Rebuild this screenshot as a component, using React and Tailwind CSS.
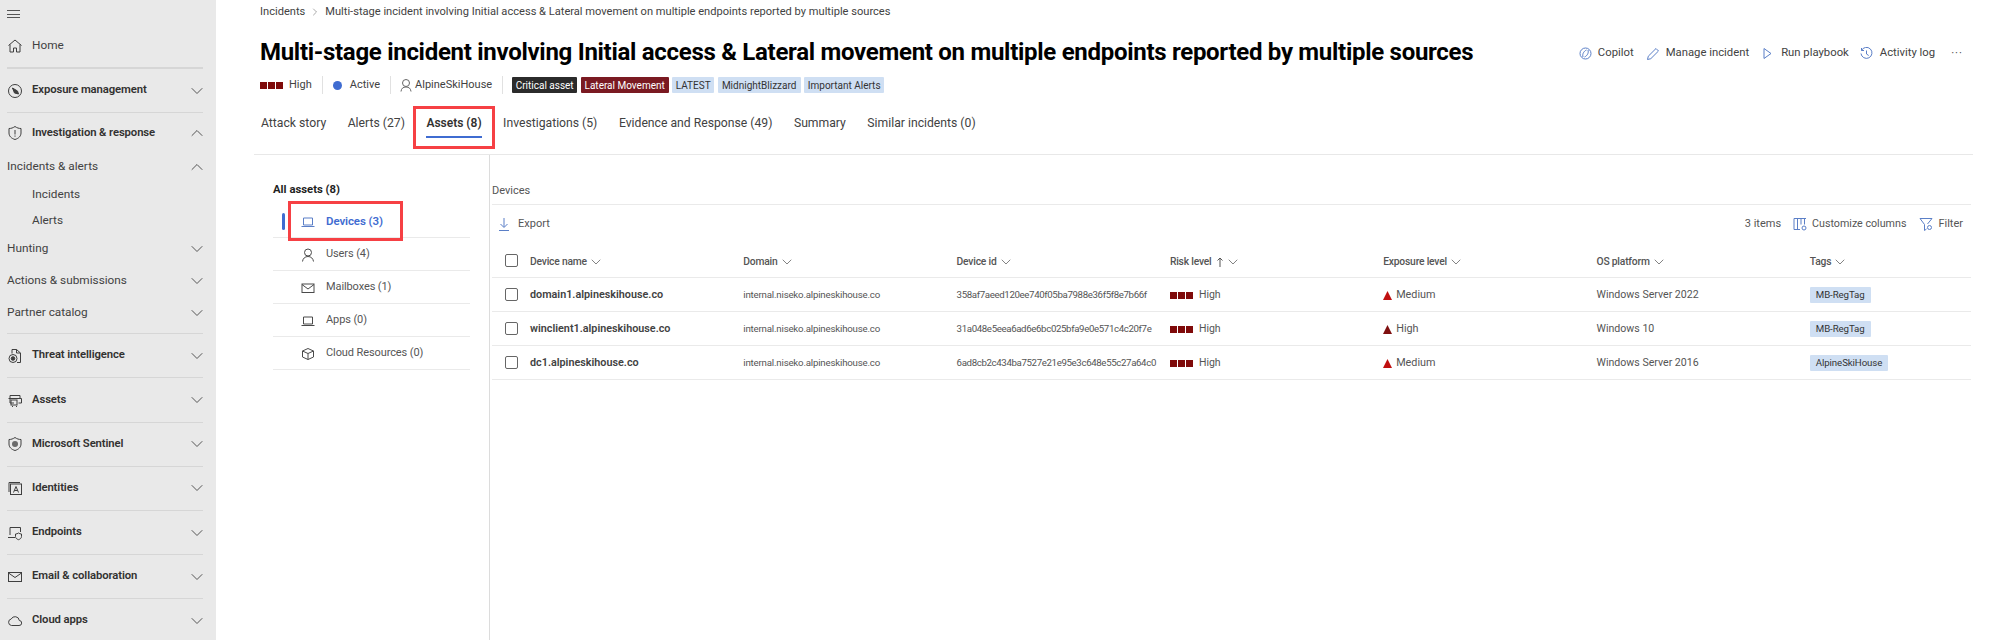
import React from "react";
import { ChevronDown, ChevronUp } from "lucide-react";

const Ico = ({ children, w = 16, h = 16, className = "", vb }) => (
  <svg width={w} height={h} viewBox={vb || `0 0 ${w} ${h}`} fill="none" stroke="currentColor" strokeWidth="1" className={`shrink-0 ${className}`}>
    {children}
  </svg>
);

const icons = {
  home: <Ico><path d="M1.5 7.5 8 2l6.5 5.5M3 6.5v7.5h3.5v-4h3v4H13V6.5" /></Ico>,
  exposure: <Ico><circle cx="8" cy="8" r="6.5" /><path d="M5 5l6 6M5.500 5l5 3 1 3-4-1z" fill="currentColor" /></Ico>,
  shield: <Ico><path d="M8 1.5c2 1.4 3.8 2 6 2v4.5c0 3.2-2.4 5.4-6 6.5-3.6-1.1-6-3.3-6-6.5V3.5c2.2 0 4-.6 6-2z" /><path d="M8 5v4.5M8 10.5v1.2" /></Ico>,
  threat: <Ico><path d="M9.5 1.5H5v4M9.5 1.5 13.5 5v9.5H10M9.5 1.5V5h4" /><circle cx="6" cy="10.5" r="4" /><circle cx="6" cy="10.5" r="1.8" fill="currentColor" /></Ico>,
  assets: <Ico><path d="M3 11V3.5h10V6M1.5 6.5h13V11h-3M3 11h4" /><rect x="4" y="8" width="6" height="5" /><path d="M5 14.5h1M9 14.5h1" /></Ico>,
  sentinel: <Ico><path d="M8 1.5c2 1.4 3.8 2 6 2v4.5c0 3.2-2.4 5.4-6 6.5-3.6-1.1-6-3.3-6-6.5V3.5c2.2 0 4-.6 6-2z" /><circle cx="8" cy="8" r="3" fill="currentColor" stroke="none" opacity="0.75" /></Ico>,
  identities: <Ico><path d="M2 12V2.5h11" /><rect x="3.5" y="4" width="11" height="10.5" /><path d="M6.5 12.5 9 6.5l2.5 6M7.4 10.5h3.2" /></Ico>,
  endpoints: <Ico><path d="M3 10V2.5h10.5V7M1 12.5h7" /><path d="M11.5 8c1 .7 1.8 1 3 1v2.5c0 1.5-1.2 2.6-3 3.2-1.8-.6-3-1.7-3-3.2V9c1.2 0 2-.3 3-1z" /></Ico>,
  mail: <Ico><rect x="1.5" y="3.5" width="13" height="9" /><path d="M1.5 4 8 8.500 14.500 4" /></Ico>,
  cloud: <Ico><path d="M4.5 12.5h7.5a2.5 2.5 0 0 0 .3-5A4.3 4.3 0 0 0 4.2 6 3.3 3.3 0 0 0 4.5 12.500z" /></Ico>,
};

const Down = () => <ChevronDown size={20} strokeWidth={1.2} className="text-[#555] shrink-0 mr-[-4px] my-[-4px]" />;
const Up = () => <ChevronUp size={20} strokeWidth={1.2} className="text-[#555] shrink-0 mr-[-4px] my-[-4px]" />;

const Row = ({ icon, label }) => (
  <div className="flex items-center h-[44.2px] border-b border-[#d6d6d6] mr-[13px] ml-[7px]">
    <span className="w-[25px] text-[#3f3f3f]">{icons[icon]}</span>
    <span className="flex-1 text-[11.3px] tracking-[-0.1px] font-semibold text-[#323130]">{label}</span>
    <Down />
  </div>
);

const Sub = ({ label, h, open, chevron, indent }) => (
  <div style={{ height: h }} className={`flex items-center mr-[13px] ${indent ? "ml-[32px]" : "ml-[7px]"}`}>
    <span className="flex-1 text-[11.8px] text-[#424242]">{label}</span>
    {chevron && (open ? <Up /> : <Down />)}
  </div>
);

function Sidebar() {
  return (
    <aside className="w-[216px] h-[640px] shrink-0 bg-[#e9e9e9] overflow-hidden">
      <div className="h-[24px] pl-[7px] pt-[10px]">
        <div className="w-[13px] h-[8px] border-y border-[#555] relative">
          <div className="absolute top-[2.5px] w-full h-px bg-[#555]" />
        </div>
      </div>
      <div className="flex items-center h-[45px] border-b-2 border-[#d6d6d6] mx-[7px] mr-[13px]">
        <span className="w-[25px] text-[#3f3f3f]">{icons.home}</span>
        <span className="text-[11.8px] text-[#424242]">Home</span>
      </div>
      <Row icon="exposure" label="Exposure management" />
      <div className="h-[40px] flex items-center mr-[13px] ml-[7px]">
        <span className="w-[25px] text-[#3f3f3f]">{icons.shield}</span>
        <span className="flex-1 text-[11.3px] tracking-[-0.1px] font-semibold text-[#323130]">Investigation &amp; response</span>
        <Up />
      </div>
      <Sub label="Incidents & alerts" h={28} chevron open />
      <Sub label="Incidents" h={28} indent />
      <Sub label="Alerts" h={24} indent />
      <Sub label="Hunting" h={32} chevron />
      <Sub label="Actions & submissions" h={32} chevron />
      <Sub label="Partner catalog" h={31} chevron />
      <div className="h-[6px] border-b border-[#d6d6d6] mx-[7px] mr-[13px]" />
      <Row icon="threat" label="Threat intelligence" />
      <Row icon="assets" label="Assets" />
      <Row icon="sentinel" label="Microsoft Sentinel" />
      <Row icon="identities" label="Identities" />
      <Row icon="endpoints" label="Endpoints" />
      <Row icon="mail" label="Email & collaboration" />
      <Row icon="cloud" label="Cloud apps" />
    </aside>
  );
}

const Squares = () => (
  <span className="flex gap-[1px] shrink-0">
    <i className="w-[7px] h-[7px] bg-[#7f0a0a]" />
    <i className="w-[7px] h-[7px] bg-[#7f0a0a]" />
    <i className="w-[7px] h-[7px] bg-[#7f0a0a]" />
  </span>
);

const Sep = () => <span className="block w-px h-[18px] bg-[#e1e1e1]" />;

function Tag({ children, className = "bg-[#cfdff3] text-[#333]", w }) {
  return <span style={{ width: w }} className={`h-[16px] flex items-center justify-center rounded-[1px] text-[10px] whitespace-nowrap ${className}`}>{children}</span>;
}

function Header() {
  return (
    <div className="pl-[6px] pr-[2px] border-b border-[#e8e8e8] h-[155px]">
      <div className="h-[24px] flex items-center text-[11.1px] text-[#424242]">
        <span>Incidents</span>
        <ChevronDown size={12} strokeWidth={1} className="-rotate-90 mx-[4px] text-[#555]" />
        <span>Multi-stage incident involving Initial access &amp; Lateral movement on multiple endpoints reported by multiple sources</span>
      </div>
      <div className="mt-[10px] h-[36px] flex items-center justify-between">
        <h1 className="text-[24px] font-bold tracking-[-0.29px] text-black leading-none whitespace-nowrap">Multi-stage incident involving Initial access &amp; Lateral movement on multiple endpoints reported by multiple sources</h1>
        <div className="flex items-center text-[11.3px] text-[#424242] whitespace-nowrap mr-[8px] mt-[3px]">
          <span className="flex items-center gap-[6px]">
            <Ico w={13} h={13} className="text-[#5b7fc7]"><circle cx="6.500" cy="6.500" r="5.500" /><path d="M4 10c-1-3 1-6 3.500-7M9 3c1 3-1 6-3.500 7" /></Ico>Copilot
          </span>
          <span className="flex items-center gap-[6px] ml-[12px]">
            <Ico w={14} h={14} className="text-[#5b7fc7]"><path d="M1.5 12.5l.8-3.3 7.7-7.7 2.5 2.5-7.7 7.7z" /></Ico>Manage incident
          </span>
          <span className="flex items-center gap-[9px] ml-[14px]">
            <Ico w={9} h={13} className="text-[#5b7fc7]"><path d="M1 1.5v10l7-5z" /></Ico>Run playbook
          </span>
          <span className="flex items-center gap-[7px] ml-[11px]">
            <Ico w={13} h={13} className="text-[#5b7fc7]"><path d="M1.5 3.5A5.5 5.5 0 1 1 1 6.5M1.5 1v2.5H4M6.5 3.5v3.5l2.2 1.5" /></Ico>Activity log
          </span>
          <span className="ml-[16px] tracking-[1px] leading-none">···</span>
        </div>
      </div>
      <div className="mt-[6px] h-[18px] flex items-center text-[11px] text-[#424242] whitespace-nowrap">
        <Squares />
        <span className="ml-[6px]">High</span>
        <span className="ml-[10px]"><Sep /></span>
        <span className="ml-[10px] w-[9px] h-[9px] rounded-full bg-[#3f6cd1]" />
        <span className="ml-[8px]">Active</span>
        <span className="ml-[10px]"><Sep /></span>
        <Ico w={12} h={14} className="ml-[9px] text-[#666]"><circle cx="6" cy="5" r="3.5" /><path d="M1 13.5c.3-3 2-4.500 5-4.500s4.700 1.500 5 4.500" /></Ico>
        <span className="ml-[3px]">AlpineSkiHouse</span>
        <span className="ml-[10px]"><Sep /></span>
        <div className="ml-[9px] flex gap-[3.5px]">
          <Tag w={65} className="bg-[#2b2b2b] text-white">Critical asset</Tag>
          <Tag w={88} className="bg-[#7a1a22] text-white">Lateral Movement</Tag>
          <Tag w={42}>LATEST</Tag>
          <Tag w={83}>MidnightBlizzard</Tag>
          <Tag w={80}>Important Alerts</Tag>
        </div>
      </div>
      <div className="mt-[13px] flex gap-[21.5px] text-[12.2px] text-[#424242] pl-[1px]">
        <span className="h-[31px] pt-[2px] flex items-center">Attack story</span>
        <span className="h-[31px] pt-[2px] flex items-center">Alerts (27)</span>
        <span className="relative h-[31px] pt-[2px] flex items-center text-[12px] font-semibold text-[#323130] border-b-2 border-[#3f6cd1]">
          Assets (8)
          <span className="absolute left-[-13px] right-[-13px] top-[-1px] h-[43px] border-[3px] border-[#f64044]" />
        </span>
        <span className="h-[31px] pt-[2px] flex items-center">Investigations (5)</span>
        <span className="h-[31px] pt-[2px] flex items-center">Evidence and Response (49)</span>
        <span className="h-[31px] pt-[2px] flex items-center">Summary</span>
        <span className="h-[31px] pt-[2px] flex items-center">Similar incidents (0)</span>
      </div>
    </div>
  );
}

const laptop = <Ico w={14} h={14}><path d="M2.500 10V3h9v7zM.5 11.500h13" /></Ico>;

function AssetNav() {
  const rows = [
    { label: "Devices (3)", active: true, icon: laptop },
    { label: "Users (4)", icon: <Ico w={14} h={14}><circle cx="7" cy="4.500" r="3.500" /><path d="M1.500 13.500c.4-3 2.400-5 5.500-5s5.100 2 5.500 5" /></Ico> },
    { label: "Mailboxes (1)", icon: <Ico w={14} h={14}><rect x="1" y="3" width="12" height="8.500" /><path d="M1 3.500 7 8l6-4.500" /></Ico> },
    { label: "Apps (0)", icon: laptop },
    { label: "Cloud Resources (0)", icon: <Ico w={14} h={14}><path d="M7 1.500 12.500 4v6L7 12.500 1.500 10V4zM1.500 4 7 6.500 12.500 4M7 6.500v6" /></Ico> },
  ];
  return (
    <div className="w-[236px] shrink-0 border-r border-[#dcdcdc] pl-[19px] pr-[19px] h-full">
      <div className="pt-[27px] h-[50px] text-[11.3px] font-bold text-[#1f1f1f]">All assets (8)</div>
      {rows.map((r) => (
        <div key={r.label} className="relative h-[33px] pt-[1px] flex items-center border-b border-[#eaeaea] pl-[28px] text-[11px] tracking-[-0.1px]">
          {r.active && <span className="absolute left-[9px] top-[8px] w-[3px] h-[17px] rounded-full bg-[#3f6cd1]" />}
          {r.active && <span className="absolute left-[15px] top-[-4px] w-[115px] h-[40px] border-[3px] border-[#f64044]" />}
          <span className={r.active ? "text-[#5b7fc7]" : "text-[#4a4a4a]"}>{r.icon}</span>
          <span className={`ml-[11px] ${r.active ? "font-semibold text-[11.5px] text-[#3f6cd1]" : "text-[#555]"}`}>{r.label}</span>
        </div>
      ))}
    </div>
  );
}

const Box = () => <span className="w-[13px] h-[13px] rounded-[2px] border border-[#666] shrink-0 bg-white" />;

const Th = ({ children, sort }) => (
  <div className="flex items-center text-[10.3px] tracking-[-0.2px] font-medium text-[#555] pt-[3px]">
    {children}
    {sort && <Ico w={8} h={10} className="ml-[5px]"><path d="M4 10V1M1.500 3.500 4 1l2.500 2.500" /></Ico>}
    <ChevronDown size={16} strokeWidth={1.1} className="ml-[1px] text-[#555]" />
  </div>
);

const devices = [
  { name: "domain1.alpineskihouse.co", id: "358af7aeed120ee740f05ba7988e36f5f8e7b66f", exp: "Medium", os: "Windows Server 2022", tag: "MB-RegTag" },
  { name: "winclient1.alpineskihouse.co", id: "31a048e5eea6ad6e6bc025bfa9e0e571c4c20f7e", exp: "High", os: "Windows 10", tag: "MB-RegTag" },
  { name: "dc1.alpineskihouse.co", id: "6ad8cb2c434ba7527e21e95e3c648e55c27a64c0", exp: "Medium", os: "Windows Server 2016", tag: "AlpineSkiHouse" },
];

function DeviceTable() {
  return (
    <div className="flex-1 pl-[2px] pr-[2px]">
      <div className="h-[50px] pt-[28px] border-b border-[#eaeaea] text-[11px] text-[#555] leading-[16px]">Devices</div>
      <div className="h-[38px] flex items-center text-[11px] text-[#555]">
        <Ico w={12} h={14} className="ml-[6px] text-[#5b7fc7]"><path d="M6 1v9M2.500 7 6 10.500 9.500 7M1 13.500h10" /></Ico>
        <span className="ml-[8px]">Export</span>
        <span className="ml-auto">3 items</span>
        <Ico w={14} h={14} className="ml-[12px] text-[#5b7fc7]"><path d="M1 1.500h12M1 1.500v11h6M4.500 1.500v11M8 1.500v6M11.500 1.500v6" /><circle cx="11" cy="11" r="2" /></Ico>
        <span className="ml-[5px] text-[10.7px]">Customize columns</span>
        <Ico w={14} h={14} className="ml-[13px] text-[#5b7fc7]"><path d="M1 1.500h12L8.500 7M1 1.500 5.500 7.500v6l2-1.500" /><circle cx="10.500" cy="10.500" r="2" /></Ico>
        <span className="ml-[5px] mr-[8px]">Filter</span>
      </div>
      <div className="h-[35px] flex items-center border-b border-[#eaeaea]">
        <span className="ml-[13px] mr-[12px] flex"><Box /></span>
        <div className="grid grid-cols-[213.3px_213.3px_213.3px_213.3px_213.3px_213.3px_auto] flex-1">
          <Th>Device name</Th>
          <Th>Domain</Th>
          <Th>Device id</Th>
          <Th sort>Risk level</Th>
          <Th>Exposure level</Th>
          <Th>OS platform</Th>
          <Th>Tags</Th>
        </div>
      </div>
      {devices.map((d) => (
        <div key={d.name} className="h-[34px] flex items-center border-b border-[#eaeaea]">
          <span className="ml-[13px] mr-[12px] flex"><Box /></span>
          <div className="grid grid-cols-[213.3px_213.3px_213.3px_213.3px_213.3px_213.3px_auto] flex-1 items-center text-[9.7px] text-[#555] pt-[1px]">
            <span className="text-[10.8px] font-semibold text-[#424242]">{d.name}</span>
            <span className="tracking-[-0.2px]">internal.niseko.alpineskihouse.co</span>
            <span className="tracking-[-0.37px] whitespace-nowrap">{d.id}</span>
            <span className="flex items-center"><Squares /><span className="ml-[6px] text-[10.5px]">High</span></span>
            <span className="flex items-center">
              <svg width="9" height="9" viewBox="0 0 9 9" className={d.exp === "High" ? "text-[#7f1010]" : "text-[#c01010]"}><path d="M4.500 0 9 9H0z" fill="currentColor" /></svg>
              <span className="ml-[4px] text-[10.8px]">{d.exp}</span>
            </span>
            <span className="text-[10.6px]">{d.os}</span>
            <span><span className="inline-block h-[16px] leading-[16px] px-[6px] bg-[#cfdff3] text-[9.7px] tracking-[-0.1px] text-[#333] rounded-[1px]">{d.tag}</span></span>
          </div>
        </div>
      ))}
    </div>
  );
}

export default function App() {
  return (
    <div className="w-[2000px] h-[640px] flex bg-white overflow-hidden font-['Roboto',sans-serif]">
      <Sidebar />
      <main className="flex-1 ml-[38px] mr-[27px] flex flex-col min-w-0">
        <Header />
        <div className="flex flex-1 min-h-0">
          <AssetNav />
          <DeviceTable />
        </div>
      </main>
    </div>
  );
}
